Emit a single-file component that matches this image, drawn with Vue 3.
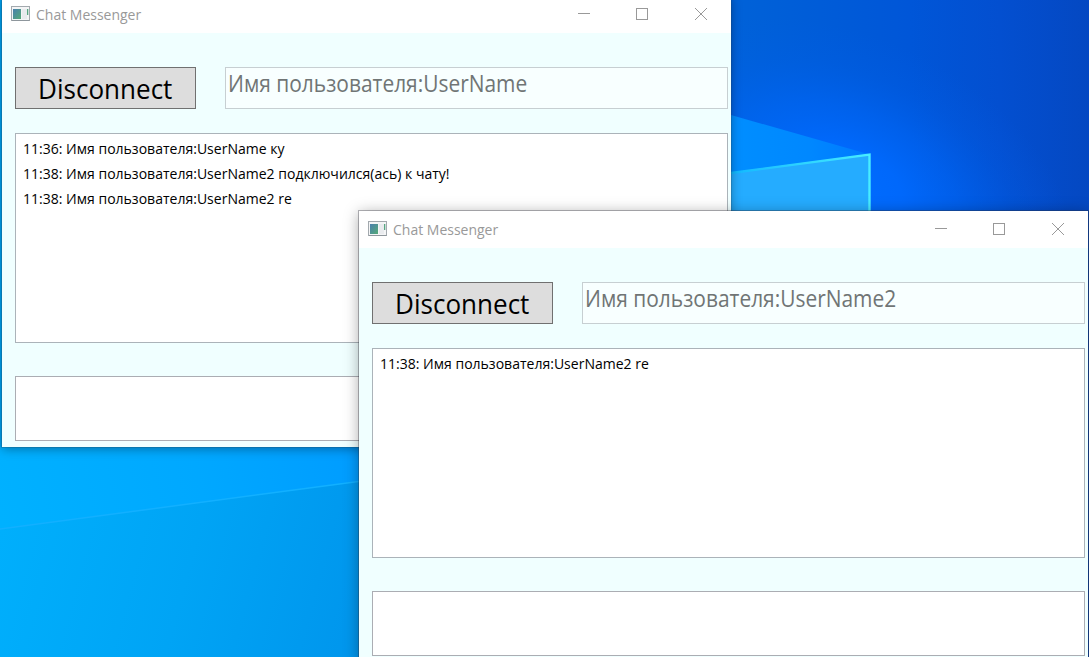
<script setup>
const windows = [
  {
    id: 'first',
    user: 'Имя пользователя:UserName',
    messages: [
      '11:36: Имя пользователя:UserName ку',
      '11:38: Имя пользователя:UserName2 подключился(ась) к чату!',
      '11:38: Имя пользователя:UserName2 re',
    ],
  },
  {
    id: 'second',
    user: 'Имя пользователя:UserName2',
    messages: ['11:38: Имя пользователя:UserName2 re'],
  },
]
</script>

<template>
  <div class="desktop">
    <svg class="wallpaper" viewBox="0 0 1089 657" aria-hidden="true">
      <defs>
        <linearGradient id="sky" x1="731" y1="0" x2="1089" y2="0" gradientUnits="userSpaceOnUse">
          <stop offset="0" stop-color="#0062d8" />
          <stop offset=".5" stop-color="#0056d8" />
          <stop offset=".75" stop-color="#034fd0" />
          <stop offset="1" stop-color="#0448c2" />
        </linearGradient>
        <radialGradient id="glow" cx="0" cy="0" r="1" gradientUnits="userSpaceOnUse" gradientTransform="translate(845 185) rotate(24) scale(240 150)">
          <stop offset="0" stop-color="#006cff" />
          <stop offset=".25" stop-color="#006aff" stop-opacity=".9" />
          <stop offset=".5" stop-color="#0066f8" stop-opacity=".6" />
          <stop offset=".75" stop-color="#0060ec" stop-opacity=".25" />
          <stop offset="1" stop-color="#005de8" stop-opacity="0" />
        </radialGradient>
        <linearGradient id="beam" x1="0" y1="520" x2="360" y2="440" gradientUnits="userSpaceOnUse">
          <stop offset="0" stop-color="#00b1ff" />
          <stop offset=".55" stop-color="#00a8ff" />
          <stop offset="1" stop-color="#009cff" />
        </linearGradient>
        <linearGradient id="floor" x1="0" y1="530" x2="370" y2="630" gradientUnits="userSpaceOnUse">
          <stop offset="0" stop-color="#00affc" />
          <stop offset=".5" stop-color="#00a4f5" />
          <stop offset="1" stop-color="#0095ec" />
        </linearGradient>
        <linearGradient id="fan" x1="731" y1="0" x2="860" y2="0" gradientUnits="userSpaceOnUse">
          <stop offset="0" stop-color="#008eff" />
          <stop offset=".6" stop-color="#0088ff" />
          <stop offset="1" stop-color="#007aff" />
        </linearGradient>
        <linearGradient id="edge" x1="731" y1="0" x2="870" y2="0" gradientUnits="userSpaceOnUse">
          <stop offset="0" stop-color="#12b8ff" />
          <stop offset="1" stop-color="#48edff" />
        </linearGradient>
      </defs>
      <rect x="700" width="389" height="260" fill="url(#sky)" />
      <rect x="700" width="389" height="260" fill="url(#glow)" />
      <path d="M731 115L868 154L868 215H731Z" fill="url(#fan)" />
      <path d="M731 172.500L870 154V215H731Z" fill="#25acff" />
      <path d="M731 173L869.500 154.500V215" stroke="url(#edge)" stroke-width="2.400" fill="none" />
      <rect width="370" height="657" fill="url(#beam)" />
      <path d="M0 529L370 480V657H0Z" fill="url(#floor)" />
      <path d="M0 529L370 480" stroke="#12b0ff" stroke-width="1.500" fill="none" />
      <rect width="2" height="447" fill="#00a4f4" />
    </svg>

    <section v-for="win in windows" :key="win.id" class="window" :class="win.id">
      <header class="titlebar">
        <svg class="app-icon" width="19" height="16" viewBox="0 0 19 16">
          <defs>
            <linearGradient :id="'tile-' + win.id" x1="0" y1="0" x2="1" y2="1">
              <stop offset="0" stop-color="#4a80ad" />
              <stop offset="1" stop-color="#55aa77" />
            </linearGradient>
          </defs>
          <rect x=".5" y=".5" width="18" height="14" fill="#f4f5f6" stroke="#a3a9ae" />
          <path d="M1 14.500H18.500" stroke="#8e969c" />
          <rect x="2" y="3" width="8" height="10" :fill="`url(#tile-${win.id})`" />
          <rect x="11" y="3" width="5" height="10" fill="#e9ebee" />
          <rect x="16" y="3" width="1.300" height="6" fill="#58a783" />
        </svg>
        <span class="title">Chat Messenger</span>
        <div class="controls">
          <svg width="12" height="12" viewBox="0 0 12 12"><path d="M0 5.500H12" /></svg>
          <svg width="12" height="12" viewBox="0 0 12 12"><rect x=".5" y=".5" width="11" height="11" /></svg>
          <svg width="12" height="12" viewBox="0 0 12 12"><path d="M0 0L12 12M12 0L0 12" /></svg>
        </div>
      </header>
      <div class="body">
        <div class="toolbar">
          <button class="connect"><span>Disconnect</span></button>
          <div class="user"><span>{{ win.user }}</span></div>
        </div>
        <ul class="messages">
          <li v-for="text in win.messages" :key="text"><span>{{ text }}</span></li>
        </ul>
        <div class="entry"></div>
      </div>
    </section>
  </div>
</template>

<style>
html,
body {
  margin: 0;
  overflow: hidden;
}
</style>

<style scoped>
.desktop {
  position: relative;
  width: 1089px;
  height: 657px;
  overflow: hidden;
  background: #0346b8;
  font-family: 'Open Sans', 'Noto Sans', sans-serif;
}
.wallpaper {
  position: absolute;
  inset: 0;
  width: 1089px;
  height: 657px;
}
.window {
  position: absolute;
  box-sizing: border-box;
  width: 729px;
  height: 451px;
  background: #f0ffff;
}
.first {
  left: 2px;
  top: -4px;
  box-shadow: 0 0 0 1px rgba(40, 60, 75, 0.2), 0 2px 10px rgba(0, 0, 0, 0.35);
}
.second {
  left: 359px;
  top: 211px;
  box-shadow: 0 0 0 1px rgba(50, 50, 60, 0.35), 0 2px 14px rgba(0, 0, 0, 0.35);
}
.titlebar {
  display: flex;
  align-items: flex-start;
  box-sizing: border-box;
  height: 37px;
  padding: 0 24px 0 9px;
  background: #fff;
  color: #999;
}
.app-icon {
  flex: none;
  margin-top: 10px;
}
.title {
  margin: 8px 0 0 6px;
  font-size: 15px;
  line-height: 20px;
  white-space: nowrap;
  transform: scaleX(0.933);
  transform-origin: 0 50%;
}
.controls {
  display: grid;
  grid-template-columns: 58px 59px 12px;
  margin: 12px 0 0 auto;
}
.controls svg {
  fill: none;
  stroke: #999;
}
.body {
  padding: 34px 3px 6px 13px;
}
.toolbar {
  display: flex;
  gap: 29px;
  margin-bottom: 24px;
}
.connect {
  box-sizing: border-box;
  width: 181px;
  height: 42px;
  padding: 0 0 1px;
  border: 1px solid #707070;
  border-radius: 0;
  background: #ddd;
  color: #000;
  font: 28px/38px 'Open Sans', 'Noto Sans', sans-serif;
}
.connect span,
.user span,
.messages span {
  display: inline-block;
  white-space: nowrap;
}
.connect span {
  transform: scaleX(0.93);
}
.user {
  box-sizing: border-box;
  flex: 1;
  height: 42px;
  padding-left: 2px;
  border: 1px solid #c7cfd2;
  background: #f8ffff;
  color: #707575;
  font-size: 23px;
  line-height: 31px;
}
.user span {
  transform: scaleX(0.91);
  transform-origin: 0 50%;
}
.messages {
  box-sizing: border-box;
  height: 210px;
  margin: 0 0 33px;
  padding: 2px 0 0 7px;
  border: 1px solid #abb3b9;
  background: #fff;
  color: #000;
  list-style: none;
  font-size: 15px;
  line-height: 25px;
}
.messages li {
  height: 25px;
}
.messages span {
  transform: scaleX(0.935);
  transform-origin: 0 50%;
}
.entry {
  box-sizing: border-box;
  height: 65px;
  border: 1px solid #abadb3;
  background: #fff;
}
</style>
